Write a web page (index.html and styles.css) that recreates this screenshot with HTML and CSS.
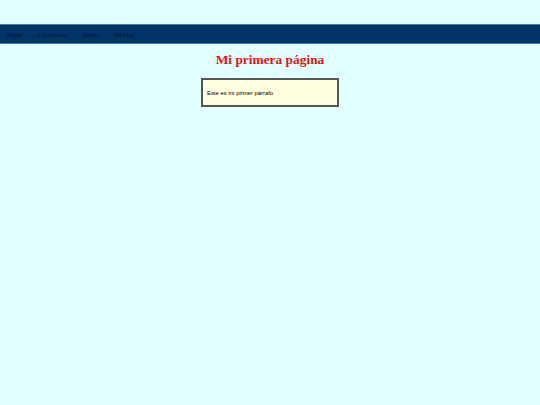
FILE: index.html
```html
<!DOCTYPE html>
<html lang="es">
<head>
<meta charset="utf-8">
<title>Mi primera página</title>
<link rel="stylesheet" href="styles.css">
</head>
<body>
<nav class="nav">
  <a class="nav-link" href="#">Home</a>
  <a class="nav-link" href="#">Calculadora</a>
  <a class="nav-link" href="#">Demo</a>
  <a class="nav-link" href="#">Mi blog</a>
</nav>
<h1 class="title">Mi primera página</h1>
<div class="box">
  <p class="text">Este es mi primer párrafo</p>
</div>
</body>
</html>
```
FILE: styles.css
```css
html, body {
  margin: 0;
  padding: 0;
  background: #e0ffff;
}
body {
  padding-top: 24px;
  font-family: "Liberation Serif", serif;
}
.nav {
  display: flex;
  gap: 15px;
  align-items: center;
  height: 20px;
  box-sizing: border-box;
  padding: 0 7px;
  background: #003366;
  border-top: 1px solid #4d7a9c;
  border-bottom: 1px solid #4d7a9c;
}
.nav-link {
  font-size: 6.4px;
  color: #050f26;
  text-decoration: none;
  padding-top: 1px;
}
.title {
  margin: 8px 0 0;
  text-align: center;
  font-size: 13.4px;
  line-height: 16px;
  color: #ee1111;
}
.box {
  width: 138px;
  height: 29px;
  box-sizing: border-box;
  margin: 10px auto 0;
  background: #ffffe0;
  border: 2px solid #555555;
  display: flex;
  align-items: center;
  padding-left: 4px;
}
.text {
  margin: 0;
  font-family: "Liberation Sans", Arial, sans-serif;
  font-size: 5.9px;
  color: #000;
}
```
